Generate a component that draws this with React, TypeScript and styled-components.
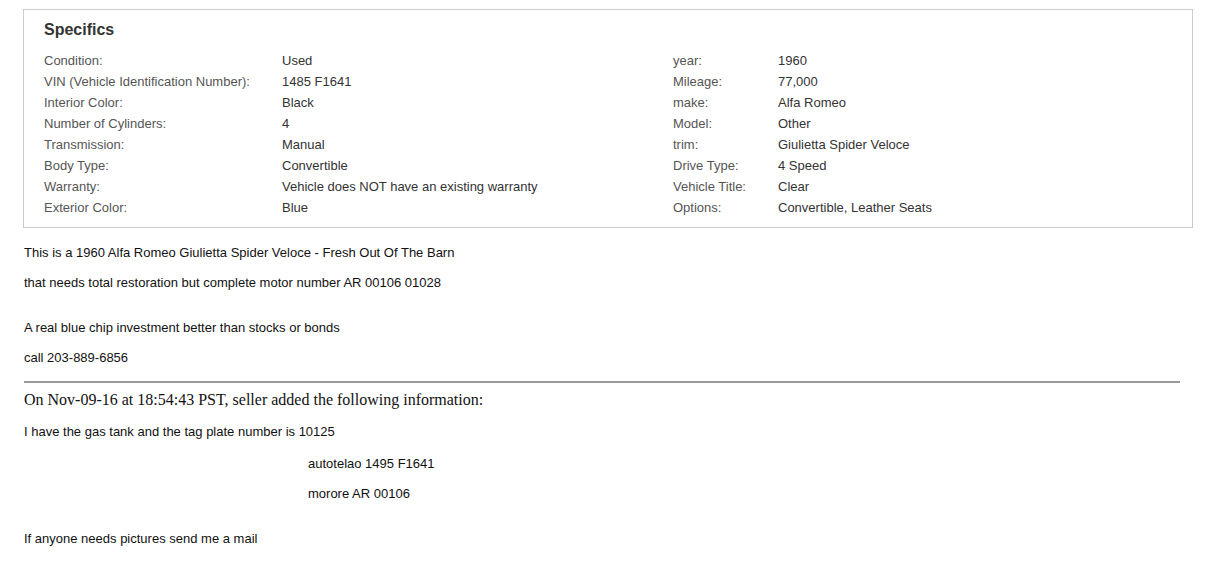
import styled, { createGlobalStyle } from "styled-components";

const GlobalStyle = createGlobalStyle`
  body {
    margin: 0;
    background: #fff;
    font-family: "Liberation Sans", Arial, sans-serif;
  }
`;

const specsLeft = [
  ["Condition:", "Used"],
  ["VIN (Vehicle Identification Number):", "1485 F1641"],
  ["Interior Color:", "Black"],
  ["Number of Cylinders:", "4"],
  ["Transmission:", "Manual"],
  ["Body Type:", "Convertible"],
  ["Warranty:", "Vehicle does NOT have an existing warranty"],
  ["Exterior Color:", "Blue"],
];

const specsRight = [
  ["year:", "1960"],
  ["Mileage:", "77,000"],
  ["make:", "Alfa Romeo"],
  ["Model:", "Other"],
  ["trim:", "Giulietta Spider Veloce"],
  ["Drive Type:", "4 Speed"],
  ["Vehicle Title:", "Clear"],
  ["Options:", "Convertible, Leather Seats"],
];

const App = () => {
  return (
    <>
      <GlobalStyle />
      <Page>
        <SpecsBox>
          <Heading>Specifics</Heading>
          <SpecsGrid>
            {specsLeft.map((row, i) => (
              <SpecRow key={i}>
                <Label>{row[0]}</Label>
                <Value>{row[1]}</Value>
                <Label>{specsRight[i][0]}</Label>
                <Value>{specsRight[i][1]}</Value>
              </SpecRow>
            ))}
          </SpecsGrid>
        </SpecsBox>
        <Description>
          <Line>This is a 1960 Alfa Romeo Giulietta Spider Veloce - Fresh Out Of The Barn</Line>
          <Line>that needs total restoration but complete motor number AR 00106 01028</Line>
          <Spacer $h={15} />
          <Line>A real blue chip investment better than stocks or bonds</Line>
          <Line>call 203-889-6856</Line>
        </Description>
        <Rule />
        <AddedNote>On Nov-09-16 at 18:54:43 PST, seller added the following information:</AddedNote>
        <Description>
          <Line>I have the gas tank and the tag plate number is 10125</Line>
          <Spacer $h={2} />
          <Line $indent>autotelao 1495 F1641</Line>
          <Line $indent>morore AR 00106</Line>
          <Spacer $h={15} />
          <Line>If anyone needs pictures send me a mail</Line>
        </Description>
      </Page>
    </>
  );
};

export default App;

const Page = styled.div`
  padding: 9px 14px 0 23px;
`;

const SpecsBox = styled.div`
  border: 1px solid #ccc;
  padding: 10px 20px 9px 20px;
  margin-bottom: 10px;
`;

const Heading = styled.h2`
  margin: 0 0 10px 0;
  font-size: 16px;
  line-height: 20px;
  font-weight: bold;
  color: #333;
`;

const SpecsGrid = styled.div`
  display: flex;
  flex-direction: column;
`;

const SpecRow = styled.div`
  display: grid;
  grid-template-columns: 238px 391px 105px 1fr;
  height: 21px;
  line-height: 21px;
  font-size: 13px;
`;

const Label = styled.div`
  color: #555;
  white-space: nowrap;
`;

const Value = styled.div`
  color: #333;
  white-space: nowrap;
`;

const Description = styled.div`
  padding-left: 1px;
  font-size: 13px;
  color: #111;
`;

const Line = styled.p<{ $indent?: boolean }>`
  margin: 0;
  line-height: 30px;
  padding-left: ${(p) => (p.$indent ? "284px" : "0")};
`;

const Spacer = styled.div<{ $h: number }>`
  height: ${(p) => p.$h}px;
`;

const Rule = styled.hr`
  margin: 8px 13px 0 1px;
  border: none;
  border-top: 2px solid #999;
`;

const AddedNote = styled.div`
  margin: 7px 0 8px 1px;
  font-family: "Liberation Serif", "Times New Roman", serif;
  font-size: 16px;
  line-height: 19px;
  color: #111;
`;
